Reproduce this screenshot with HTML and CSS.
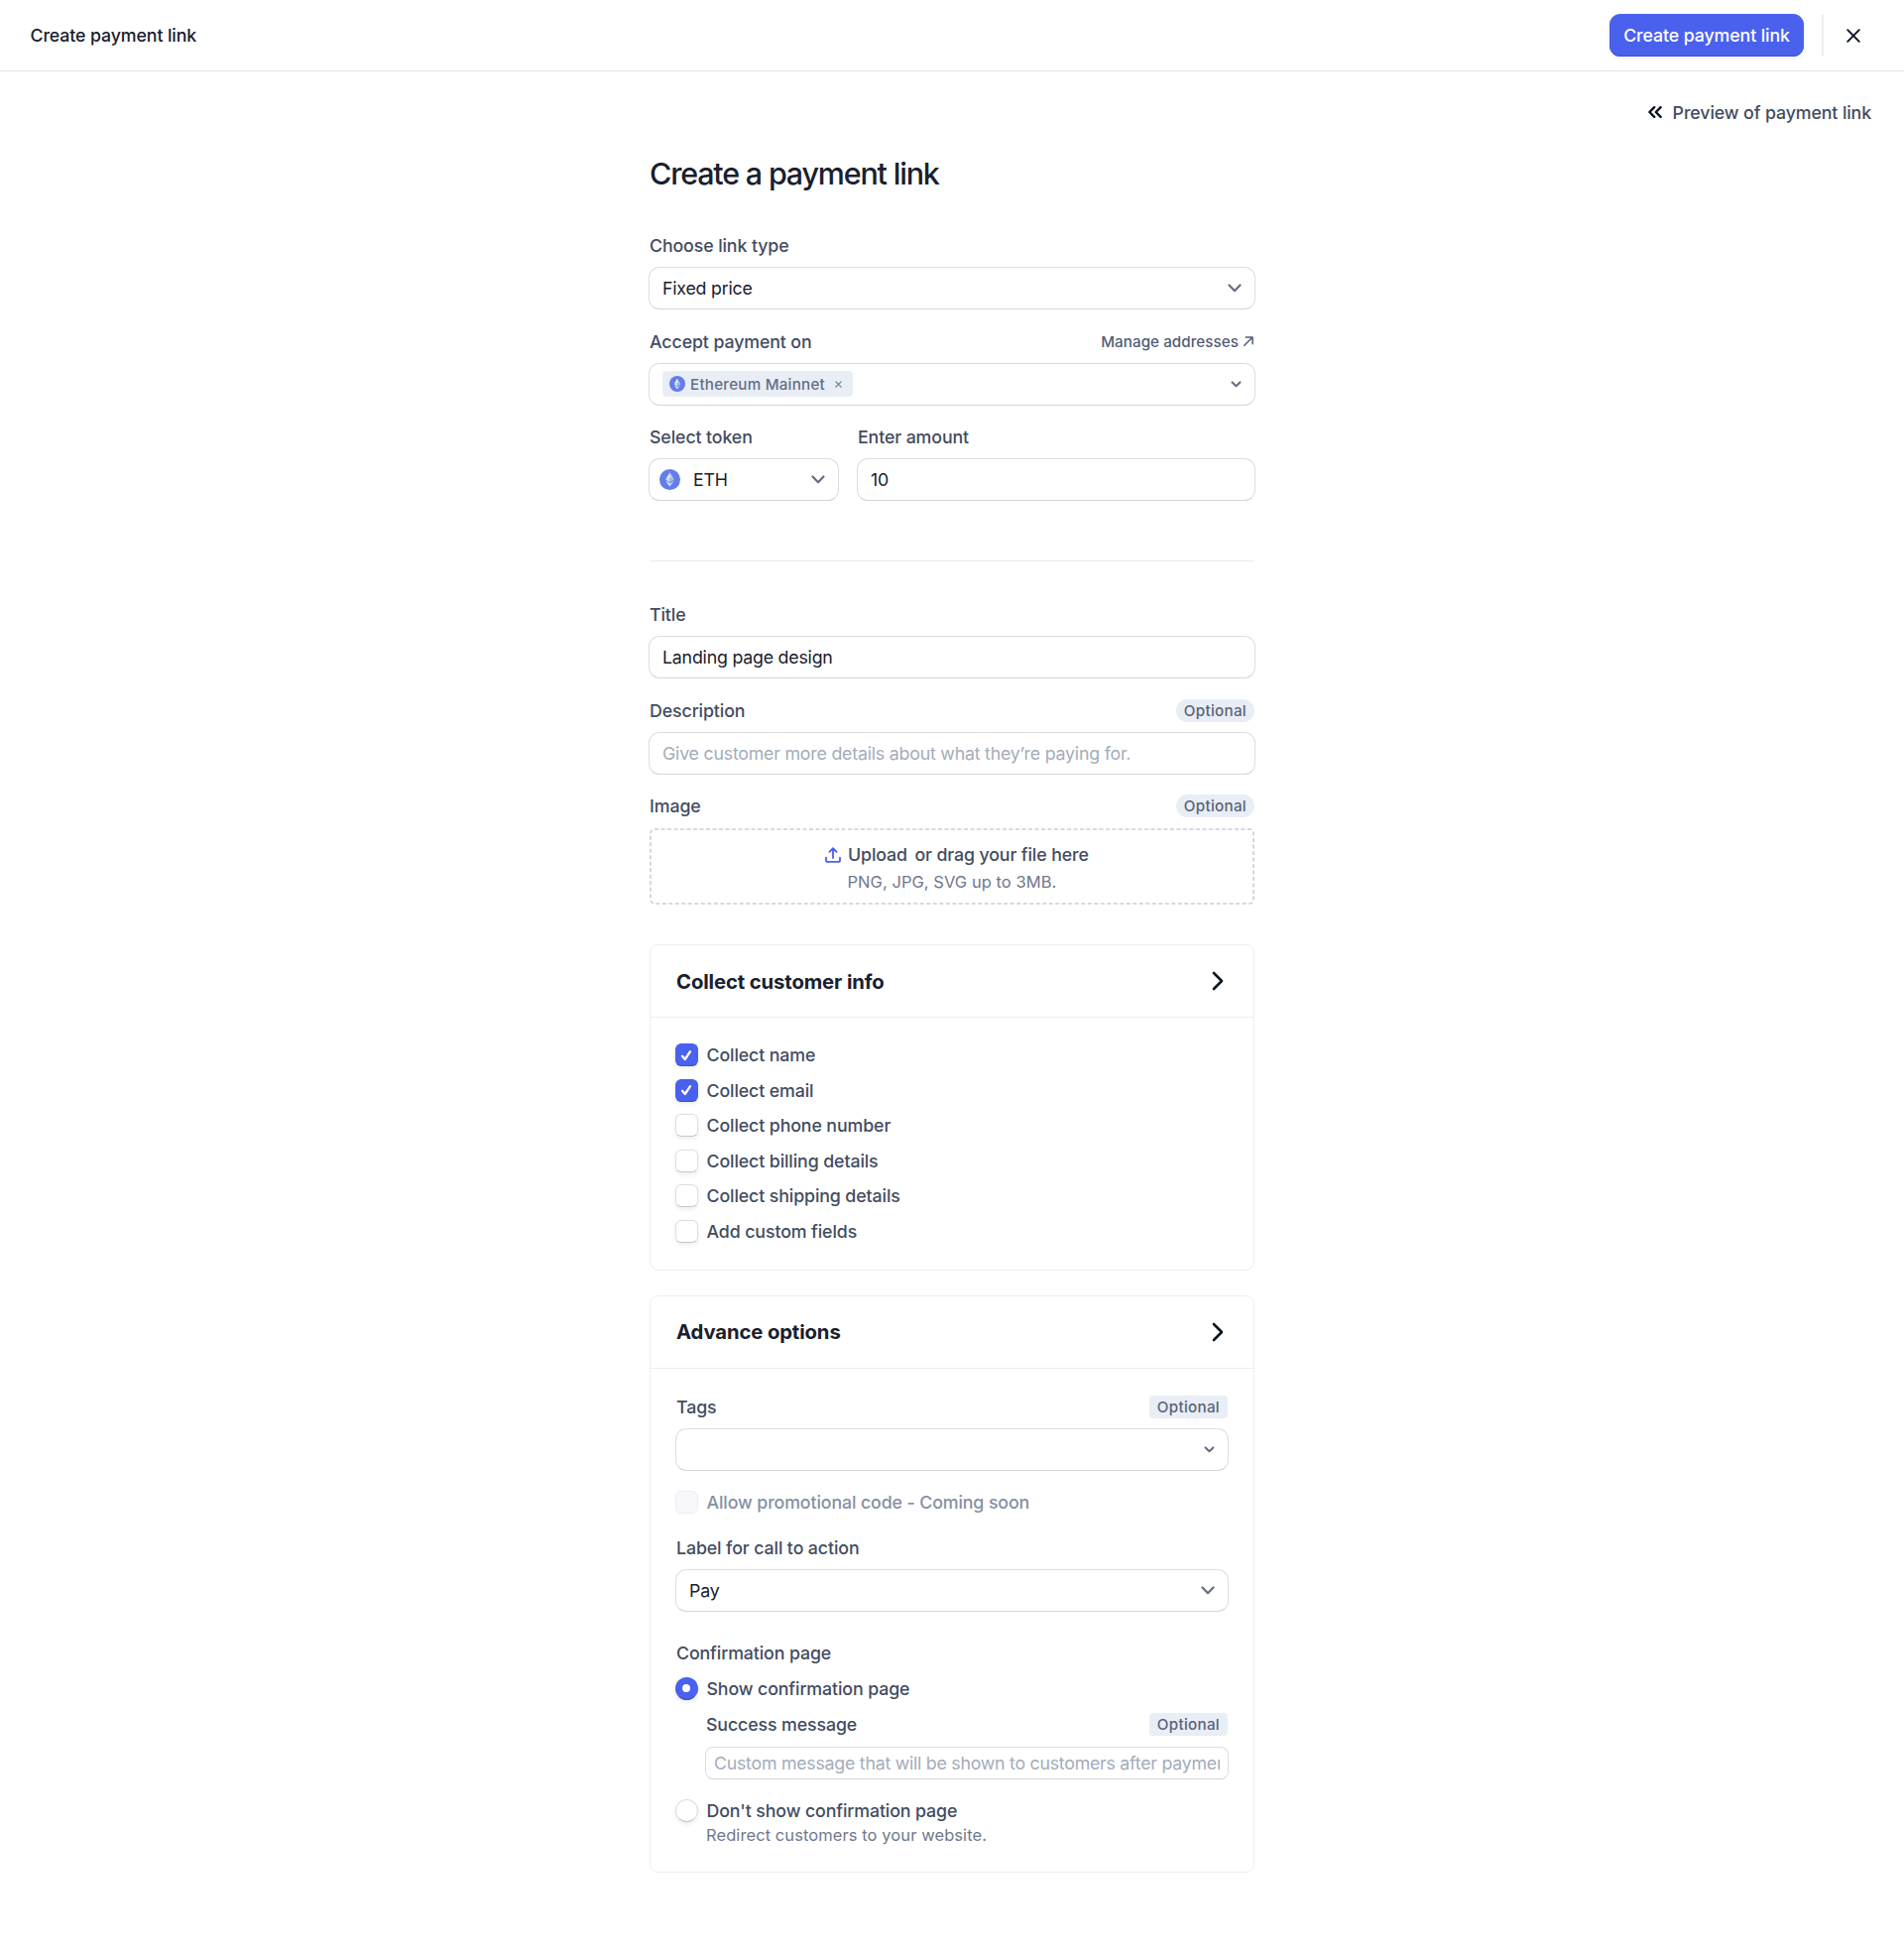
FILE: index.html
```
<!DOCTYPE html>
<html lang="en">
<head>
    <meta charset="UTF-8">
    <meta name="viewport" content="width=device-width, initial-scale=1.0">
    <title>Create payment link</title>
    <link rel="stylesheet" href="styles.css">
</head>
<body>
    <svg width="0" height="0" class="sprite">
        <symbol id="eth" viewBox="0 0 20 20">
            <circle cx="10" cy="10" r="10" fill="#627eea"/>
            <path d="M10 3.2 5.9 10.2 10 8.4z" fill="#fff" opacity=".9"/>
            <path d="M10 3.2 14.1 10.2 10 8.4z" fill="#fff" opacity=".6"/>
            <path d="M5.9 10.2 10 8.4v4.3z" fill="#fff" opacity=".7"/>
            <path d="M14.1 10.2 10 8.4v4.3z" fill="#fff" opacity=".4"/>
            <path d="M5.9 11.2 10 16.8v-3.2z" fill="#fff" opacity=".9"/>
            <path d="M14.1 11.2 10 16.8v-3.2z" fill="#fff" opacity=".6"/>
        </symbol>
        <symbol id="chevron" viewBox="0 0 14 9">
            <path d="M1.5 1.5 7 7.2l5.5-5.7" fill="none" stroke="#646e85" stroke-width="2.2" stroke-linecap="round" stroke-linejoin="round"/>
        </symbol>
        <symbol id="chevron-small" viewBox="0 0 11 7">
            <path d="M1.6 1.4 5.5 5.2l3.9-3.8" fill="none" stroke="#646e85" stroke-width="2.1" stroke-linecap="round" stroke-linejoin="round"/>
        </symbol>
        <symbol id="check" viewBox="0 0 12 12">
            <path d="M2 6.8 4.8 10 10 2.2" fill="none" stroke="#fff" stroke-width="2.3" stroke-linecap="round" stroke-linejoin="round"/>
        </symbol>
    </svg>

    <header class="topbar">
        <span class="topbar-title">Create payment link</span>
        <div class="topbar-actions">
            <button class="btn-primary">Create payment link</button>
            <button class="btn-close" aria-label="Close">
                <svg width="14" height="14" viewBox="0 0 14 14"><path d="M1.2 1.2l11.6 11.6M12.8 1.2 1.2 12.8" fill="none" stroke="#0b1220" stroke-width="1.9" stroke-linecap="round"/></svg>
            </button>
        </div>
    </header>

    <div class="preview">
        <svg width="14" height="12" viewBox="0 0 14 12"><path d="M6.2 1.2 1.4 6l4.8 4.8M12.6 1.2 7.8 6l4.8 4.8" fill="none" stroke="#0b1220" stroke-width="2.4" stroke-linecap="round" stroke-linejoin="round"/></svg>
        <a>Preview of payment link</a>
    </div>

    <main class="form">
        <h1>Create a payment link</h1>

        <div class="fields">
            <div class="field">
                <div class="label"><span>Choose link type</span></div>
                <div class="control"><span>Fixed price</span><svg class="chevron"><use href="#chevron"/></svg></div>
            </div>
            <div class="field">
                <div class="label">
                    <span>Accept payment on</span>
                    <a class="manage">Manage addresses
                        <svg width="10" height="10" viewBox="0 0 10 10"><path d="M.8 9.2 9 1M2.2.9H9.1V7.8" fill="none" stroke="#525c75" stroke-width="1.5" stroke-linecap="round" stroke-linejoin="round"/></svg>
                    </a>
                </div>
                <div class="control">
                    <div class="chip">
                        <svg width="16" height="16"><use href="#eth"/></svg>
                        <span>Ethereum Mainnet</span>
                        <svg width="7" height="7" viewBox="0 0 7 7"><path d="M.5.5l6 6M6.5.5l-6 6" stroke="#7b859b" stroke-width="1.2"/></svg>
                    </div>
                    <svg class="chevron small"><use href="#chevron-small"/></svg>
                </div>
            </div>
            <div class="row">
                <div class="field token">
                    <div class="label"><span>Select token</span></div>
                    <div class="control token-control">
                        <svg width="21" height="21"><use href="#eth"/></svg>
                        <span>ETH</span>
                        <svg class="chevron"><use href="#chevron"/></svg>
                    </div>
                </div>
                <div class="field amount">
                    <div class="label"><span>Enter amount</span></div>
                    <input class="control" type="text" value="10">
                </div>
            </div>
        </div>

        <hr>

        <div class="fields">
            <div class="field">
                <div class="label"><span>Title</span></div>
                <input class="control" type="text" value="Landing page design">
            </div>
            <div class="field">
                <div class="label"><span>Description</span><span class="badge round">Optional</span></div>
                <input class="control" type="text" placeholder="Give customer more details about what they’re paying for.">
            </div>
            <div class="field">
                <div class="label"><span>Image</span><span class="badge round">Optional</span></div>
                <div class="upload">
                    <svg class="dashes"><rect x="1" y="1" width="608" height="75" rx="4"/></svg>
                    <div class="upload-title">
                        <svg width="16" height="16" viewBox="0 0 16 16"><path d="M1 10.6v2.6c0 1 .7 1.7 1.7 1.7h10.6c1 0 1.7-.7 1.7-1.7v-2.6M8 11V1.6M4.4 4.8 8 1.2l3.6 3.6" fill="none" stroke="#4a61ee" stroke-width="1.8" stroke-linecap="round" stroke-linejoin="round"/></svg>
                        <span>Upload</span>
                        <span>or drag your file here</span>
                    </div>
                    <div class="upload-hint">PNG, JPG, SVG up to 3MB.</div>
                </div>
            </div>
        </div>

        <section class="card">
            <div class="card-head">
                <h2>Collect customer info</h2>
                <svg width="12" height="20" viewBox="0 0 12 20"><path d="M2 2l8 8-8 8" fill="none" stroke="#0b1220" stroke-width="2.6" stroke-linecap="round" stroke-linejoin="round"/></svg>
            </div>
            <div class="card-body checks">
                <label class="option"><span class="box checked"><svg width="12" height="12"><use href="#check"/></svg></span>Collect name</label>
                <label class="option"><span class="box checked"><svg width="12" height="12"><use href="#check"/></svg></span>Collect email</label>
                <label class="option"><span class="box"></span>Collect phone number</label>
                <label class="option"><span class="box"></span>Collect billing details</label>
                <label class="option"><span class="box"></span>Collect shipping details</label>
                <label class="option"><span class="box"></span>Add custom fields</label>
            </div>
        </section>

        <section class="card">
            <div class="card-head">
                <h2>Advance options</h2>
                <svg width="12" height="20" viewBox="0 0 12 20"><path d="M2 2l8 8-8 8" fill="none" stroke="#0b1220" stroke-width="2.6" stroke-linecap="round" stroke-linejoin="round"/></svg>
            </div>
            <div class="card-body">
                <div class="field">
                    <div class="label"><span>Tags</span><span class="badge">Optional</span></div>
                    <div class="control"><svg class="chevron small"><use href="#chevron-small"/></svg></div>
                </div>
                <label class="option disabled"><span class="box"></span>Allow promotional code - Coming soon</label>
                <div class="field">
                    <div class="label"><span>Label for call to action</span></div>
                    <div class="control"><span>Pay</span><svg class="chevron"><use href="#chevron"/></svg></div>
                </div>
                <div class="confirmation">
                    <div class="label"><span>Confirmation page</span></div>
                    <label class="option"><span class="box radio checked"></span>Show confirmation page</label>
                    <div class="success">
                        <div class="label"><span>Success message</span><span class="badge">Optional</span></div>
                        <input class="control compact" type="text" placeholder="Custom message that will be shown to customers after payment">
                    </div>
                    <label class="option"><span class="box radio"></span>Don't show confirmation page</label>
                    <p class="help">Redirect customers to your website.</p>
                </div>
            </div>
        </section>
    </main>
</body>
</html>
```
FILE: styles.css
```
* {
    box-sizing: border-box;
}

body {
    margin: 0;
    background-color: #fff;
    font-family: Inter, sans-serif;
    font-size: 17.8px;
    font-weight: 500;
    line-height: 25px;
    letter-spacing: -0.12px;
    color: #434c61;
}

button, input {
    font: inherit;
    letter-spacing: inherit;
}

.sprite {
    position: absolute;
}

.topbar {
    display: flex;
    justify-content: space-between;
    align-items: center;
    height: 72px;
    padding: 0 38px 0 30.5px;
    border-bottom: 1px solid #e3e5e8;
}

.topbar-title {
    color: #1a202e;
}

.topbar-actions {
    display: flex;
    align-items: center;
}

.btn-primary {
    width: 196px;
    height: 43px;
    padding: 0;
    border: none;
    border-radius: 11px;
    background-color: #4a61ee;
    color: #fff;
    box-shadow: inset 0 -1px 0 #3c50d0, 0 2px 4px rgba(60, 66, 87, 0.08);
}

.btn-close {
    display: flex;
    align-items: center;
    height: 41px;
    margin-left: 18px;
    padding: 0 6px 0 23px;
    border: none;
    border-left: 2px solid #ebeef1;
    background: none;
}

.preview {
    display: flex;
    justify-content: flex-end;
    align-items: center;
    gap: 11px;
    height: 25px;
    margin-top: 28.5px;
    padding-right: 33px;
}

.form {
    width: 612px;
    margin: 0 auto;
}

h1 {
    margin: 29px 1px 0;
    font-size: 30.5px;
    font-weight: 500;
    line-height: 40px;
    letter-spacing: -1.2px;
    color: #1a202e;
}

.fields {
    display: flex;
    flex-direction: column;
    gap: 19.5px;
    margin-top: 40.5px;
}

.label {
    display: flex;
    justify-content: space-between;
    align-items: center;
    height: 25px;
    margin: 0 1px 9px;
}

.manage {
    display: flex;
    align-items: center;
    gap: 5px;
    margin-right: 1px;
    font-size: 15.2px;
    letter-spacing: 0.05px;
    color: #525c75;
}

.control {
    display: flex;
    align-items: center;
    width: 100%;
    height: 43px;
    padding: 0 13px;
    border: 1px solid #dcdee6;
    border-bottom-color: #d3d6de;
    border-radius: 11px;
    background-color: #fff;
    color: #1a202e;
    font-weight: 400;
    letter-spacing: -0.22px;
    outline: none;
}

.control::placeholder {
    color: #a3acba;
    opacity: 1;
}

.chevron {
    width: 14px;
    height: 9px;
    margin-left: auto;
}

.chevron.small {
    width: 11px;
    height: 7px;
}

.chip {
    display: flex;
    align-items: center;
    height: 26px;
    padding: 0 11px 0 7px;
    border-radius: 4px;
    background-color: #e9edf6;
    font-size: 15.2px;
    font-weight: 500;
    letter-spacing: 0.23px;
    color: #646e85;
}

.chip span {
    margin: 0 10px 0 5px;
}

.row {
    display: flex;
    gap: 18px;
}

.token {
    width: 192px;
}

.amount {
    flex: 1;
}

.token-control {
    padding-left: 10px;
}

.token-control span {
    margin-left: 13px;
}

hr {
    height: 1px;
    margin: 60px 1px 0;
    border: none;
    background-color: #e9ebee;
}

hr + .fields {
    margin-top: 41px;
}

.badge {
    height: 23px;
    padding: 0 8px;
    border-radius: 4px;
    background-color: #e9edf6;
    font-size: 15.2px;
    line-height: 23px;
    letter-spacing: 0.3px;
    color: #596278;
}

.badge.round {
    border-radius: 12px;
}

.upload {
    position: relative;
    height: 77px;
    margin: 10px 1px 0;
    padding-top: 14px;
}

.dashes {
    position: absolute;
    top: 0;
    left: 0;
    width: 100%;
    height: 100%;
}

.dashes rect {
    fill: none;
    stroke: #c8ced9;
    stroke-width: 1.6;
    stroke-dasharray: 4 2.5;
}

.upload-title {
    display: flex;
    align-items: center;
    gap: 7.5px;
    margin-left: 176.5px;
}

.upload-hint {
    margin: 3px 0 0 199.5px;
    font-size: 16.5px;
    font-weight: 400;
    letter-spacing: 0.05px;
    color: #70798c;
}

.card {
    margin: 40px 1px 0;
    border: 1px solid #eceef1;
    border-radius: 9px;
}

.card + .card {
    margin-top: 25px;
}

.card-head {
    display: flex;
    justify-content: space-between;
    align-items: center;
    height: 73px;
    padding: 0 30px 0 26px;
    border-bottom: 1px solid #eceef1;
}

h2 {
    margin: 0;
    font-size: 20.3px;
    font-weight: 650;
    letter-spacing: -0.12px;
    color: #1a202e;
}

.card-body {
    padding: 26px 25px 24px;
}

.card-body.checks {
    display: flex;
    flex-direction: column;
    gap: 10.6px;
    padding: 25px 25px 26px;
}

.option {
    display: flex;
    align-items: center;
    gap: 9px;
    height: 25px;
    margin-left: -0.5px;
}

.box {
    display: flex;
    align-items: center;
    justify-content: center;
    width: 23px;
    height: 23px;
    border: 1px solid #dcdee3;
    border-bottom-color: #c5c8cf;
    border-radius: 6px;
    box-shadow: 0 2px 4px rgba(60, 66, 87, 0.1);
}

.box.checked {
    border-color: #4a61ee;
    border-bottom-color: #3c50d0;
    background-color: #4a61ee;
}

.box.radio {
    border-radius: 50%;
}

.radio.checked::after {
    content: "";
    width: 8px;
    height: 8px;
    border-radius: 50%;
    background-color: #fff;
}

.option.disabled {
    margin: 19px 0 21px -0.5px;
    color: #8790a3;
}

.disabled .box {
    border-color: #ebeef3;
    background-color: #f7f8fc;
    box-shadow: none;
}

.confirmation {
    margin-top: 29px;
}

.confirmation > .label {
    margin-bottom: 11px;
}

.success {
    margin: 11px 0 19px 30px;
}

.success .label {
    margin-bottom: 10px;
}

.compact {
    height: 33px;
    padding: 0 8px;
    border-radius: 8px;
    letter-spacing: -0.26px;
}

.help {
    margin: 0 0 0 31px;
    font-size: 16.5px;
    font-weight: 400;
    letter-spacing: 0.08px;
    color: #70798c;
}
```
